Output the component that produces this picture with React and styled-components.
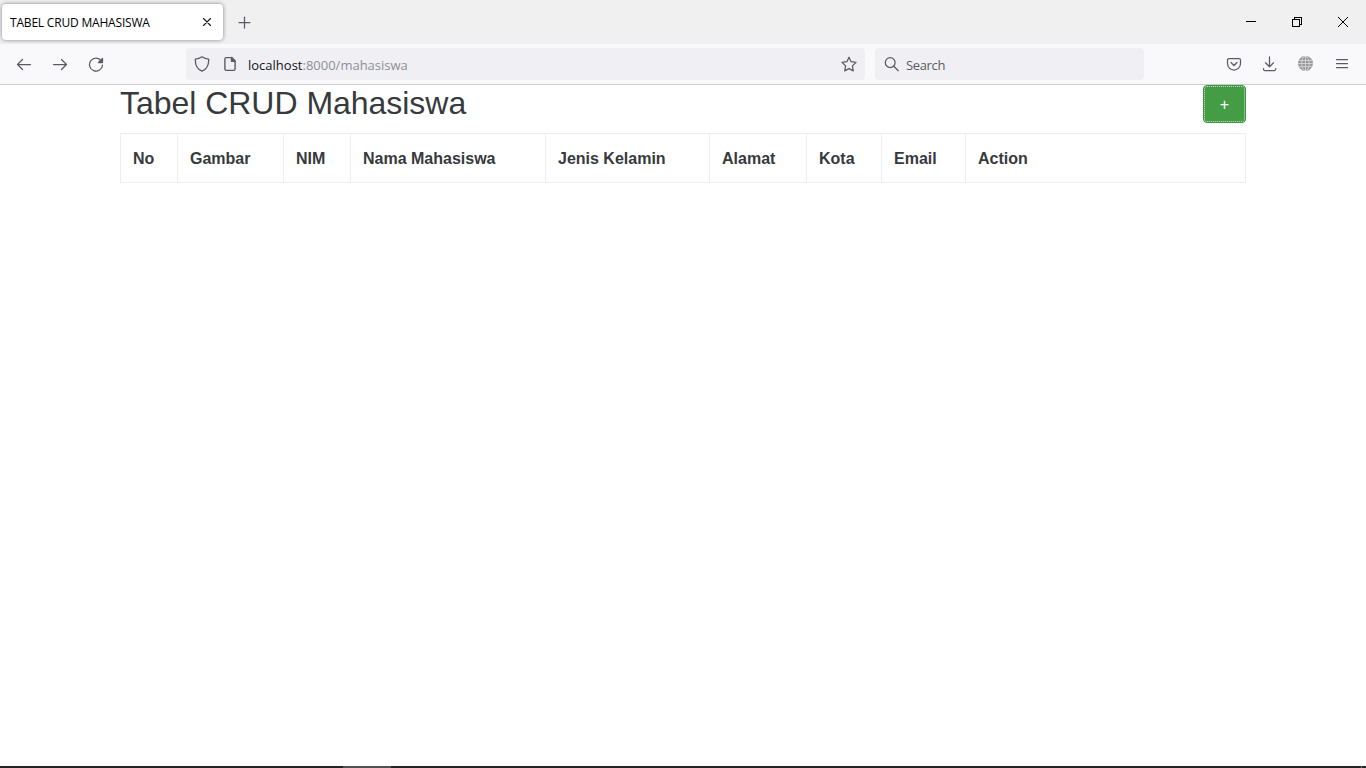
import React from 'react';
import styled, { createGlobalStyle } from 'styled-components';

const GlobalStyle = createGlobalStyle`
  * { box-sizing: border-box; }
  body {
    margin: 0;
    background: #fff;
    overflow: hidden;
    font-family: "Open Sans", "Noto Sans", sans-serif;
  }
`;

const Screen = styled.div`
  display: flex;
  flex-direction: column;
  width: 1366px;
  height: 768px;
`;

const TabStrip = styled.header`
  display: flex;
  align-items: flex-start;
  height: 44px;
  padding: 4px 0 0 2px;
  background: #f0f0f0;
`;

const Tab = styled.div`
  display: flex;
  align-items: center;
  justify-content: space-between;
  width: 221px;
  height: 36px;
  padding: 0 8px;
  border-radius: 4px;
  background: #fff;
  box-shadow: 0 0 4px rgba(0, 0, 0, 0.45);
`;

const TabTitle = styled.span`
  padding-top: 2px;
  font-size: 12px;
  line-height: 16px;
  letter-spacing: -0.19px;
  white-space: nowrap;
  color: #000;
`;

const NewTab = styled.div`
  display: flex;
  margin: 10px 0 0 13px;
`;

const WindowControls = styled.div`
  display: flex;
  margin: -4px 0 0 auto;
`;

const WindowButton = styled.div`
  display: flex;
  align-items: center;
  justify-content: center;
  width: 46px;
  height: 44px;
`;

const Toolbar = styled.nav`
  display: flex;
  align-items: center;
  height: 41px;
  padding: 0 16px;
  border-bottom: 1px solid #cccccf;
  background: #f9f9fb;
`;

const IconGroup = styled.div`
  display: flex;
  gap: 20px;
  margin-left: ${(p) => (p.$end ? 'auto' : '0')};
`;

const Field = styled.div`
  display: flex;
  align-items: center;
  width: ${(p) => p.$width}px;
  height: 32px;
  margin-left: ${(p) => p.$gap}px;
  padding: 0 8px;
  border-radius: 4px;
  background: #f0f0f4;
`;

const FieldText = styled.span`
  flex: 1;
  margin-left: ${(p) => p.$gap}px;
  padding-top: 2px;
  font-size: 13px;
  line-height: 20px;
  letter-spacing: ${(p) => p.$tracking}px;
  white-space: nowrap;
  color: ${(p) => p.$color};
`;

const Host = styled.span`
  color: #15141a;
`;

const PageIcon = styled.span`
  display: flex;
  margin-left: 12px;
`;

const Glyph = styled.svg`
  display: block;
  flex: none;
  fill: none;
  stroke: ${(p) => p.$color || '#5b5b66'};
  stroke-width: ${(p) => p.$weight || 1.25};
  stroke-linecap: round;
  stroke-linejoin: round;
`;

const Page = styled.main`
  flex: 1;
  padding: 0 120px;
  color: #373a3c;
  font-family: "Liberation Sans", Arial, sans-serif;
`;

const Heading = styled.div`
  display: flex;
  justify-content: space-between;
  height: 48px;
`;

const Title = styled.h2`
  margin: 0;
  font-size: 32px;
  font-weight: 400;
  line-height: 37px;
  letter-spacing: -0.03px;
`;

const AddButton = styled.button`
  width: 43px;
  height: 38px;
  padding: 1px 0 0;
  border: 1px solid #419641;
  border-radius: 4px;
  background: #449d44;
  color: #fff;
  outline: 1px dotted #c2dfc2;
  outline-offset: -2px;
  font: 16px/24px "Liberation Sans", Arial, sans-serif;
`;

const Table = styled.table`
  width: 1126px;
  height: 50px;
  table-layout: fixed;
  border-collapse: collapse;
`;

const HeadCell = styled.th`
  width: ${(p) => p.$width}px;
  padding: 2px 12px 0;
  border: 1px solid #eceeef;
  font-size: 16px;
  line-height: 24px;
  text-align: left;
  white-space: nowrap;
`;

const Taskbar = styled.footer`
  display: flex;
  justify-content: space-between;
  height: 2px;
  padding: 0 4px 0 343px;
  background: #242526;
`;

const TaskMark = styled.span`
  width: ${(p) => p.$width}px;
  background: ${(p) => p.$color};
`;

const Icon = ({ size = 16, children, ...rest }) => (
  <Glyph width={size} height={size} viewBox={`0 0 ${size} ${size}`} {...rest}>
    {children}
  </Glyph>
);

const columns = [
  ['No', 57],
  ['Gambar', 106],
  ['NIM', 67],
  ['Nama Mahasiswa', 195],
  ['Jenis Kelamin', 164],
  ['Alamat', 97],
  ['Kota', 75],
  ['Email', 84],
  ['Action', 280],
];

export default function App() {
  return (
    <Screen>
      <GlobalStyle />
      <TabStrip>
        <Tab>
          <TabTitle>TABEL CRUD MAHASISWA</TabTitle>
          <Icon $color="#15141a" $weight={1.1}>
            <path d="M4.5 4.5l7 7M11.5 4.5l-7 7" />
          </Icon>
        </Tab>
        <NewTab>
          <Icon>
            <path d="M8.5 3v11M3 8.5h11" />
          </Icon>
        </NewTab>
        <WindowControls>
          <WindowButton>
            <Icon size={10} $color="#000" $weight={1} shapeRendering="crispEdges">
              <path d="M0 4.5h10" strokeLinecap="butt" />
            </Icon>
          </WindowButton>
          <WindowButton>
            <Icon size={10} $color="#000" $weight={1} shapeRendering="crispEdges">
              <path d="M.5 2.5h7v7h-7zM2.5 2.5v-2h7v7h-2" />
            </Icon>
          </WindowButton>
          <WindowButton>
            <Icon size={10} $color="#000" $weight={1}>
              <path d="M0 0l10 10M10 0L0 10" />
            </Icon>
          </WindowButton>
        </WindowControls>
      </TabStrip>

      <Toolbar>
        <IconGroup>
          <Icon>
            <path d="M14.5 8.5h-13M6.5 3.5l-5 5 5 5" />
          </Icon>
          <Icon>
            <path d="M1.5 8.5h13M9.5 3.5l5 5-5 5" />
          </Icon>
          <Icon>
            <path d="M13.4 5A6.5 6.5 0 1 0 14.5 9" />
            <path d="M14.5 2.5v4h-4z" fill="#5b5b66" />
          </Icon>
        </IconGroup>

        <Field $width={679} $gap={82}>
          <Icon $weight={1.3}>
            <path d="M8 .8c2 1.5 4.2 2.2 6.7 2.3.2 5.3-1.5 9.8-6.7 12.1C2.8 12.900 1.100 8.400 1.300 3.100 3.800 3 6 2.300 8 .8z" />
          </Icon>
          <PageIcon>
            <Icon $weight={1.4}>
              <path d="M9.700 1.600H4.200a1.300 1.300 0 0 0-1.300 1.300v10.200a1.300 1.300 0 0 0 1.300 1.300h7.600a1.300 1.300 0 0 0 1.300-1.300V5z" />
              <path d="M9.500 1.600v3.600h3.600z" fill="#5b5b66" />
            </Icon>
          </PageIcon>
          <FieldText $gap={10} $tracking={0} $color="#8f8f96">
            <Host>localhost</Host>:8000/mahasiswa
          </FieldText>
          <Icon>
            <path d="M8 1.200l2.100 4.500 4.900.7-3.600 3.500.9 5L8 12.600l-4.300 2.300.9-5L1 6.400l4.900-.7z" />
          </Icon>
        </Field>

        <Field $width={269} $gap={10}>
          <Icon size={18}>
            <circle cx="7.2" cy="7.600" r="4.900" />
            <path d="M10.800 11.200l4.500 4.500" />
          </Icon>
          <FieldText $gap={5} $tracking={-0.35} $color="#5b5b66">Search</FieldText>
        </Field>

        <IconGroup $end>
          <Icon>
            <path d="M3 2.500h10A1.500 1.500 0 0 1 14.500 4v3.500a6.500 6.500 0 0 1-13 0V4A1.500 1.500 0 0 1 3 2.500zM5 6.500l3 3 3-3" />
          </Icon>
          <Icon>
            <path d="M7.500 .8v9.700M3.500 6.800l4 4 4-4M1.500 12.500v.8c0 .8.5 1.200 1.200 1.200h9.800c.8 0 1.200-.5 1.200-1.200v-.8" />
          </Icon>
          <Icon $color="#e4e4e6" $weight={0.7}>
            <circle cx="7.500" cy="7.500" r="7.500" fill="#999" stroke="none" />
            <path d="M7.500 0v15M1 4.500h13M0 7.500h15M1 10.700h13" />
            <ellipse cx="7.500" cy="7.500" rx="3.800" ry="7.300" />
          </Icon>
          <Icon>
            <path d="M2.500 3.500h11M2.500 7.500h11M2.500 11.500h11" />
          </Icon>
        </IconGroup>
      </Toolbar>

      <Page>
        <Heading>
          <Title>Tabel CRUD Mahasiswa</Title>
          <AddButton>+</AddButton>
        </Heading>
        <Table>
          <thead>
            <tr>
              {columns.map(([label, width]) => (
                <HeadCell key={label} $width={width}>
                  {label}
                </HeadCell>
              ))}
            </tr>
          </thead>
        </Table>
      </Page>

      <Taskbar>
        <TaskMark $width={48} $color="#525354" />
        <TaskMark $width={1} $color="#77787a" />
      </Taskbar>
    </Screen>
  );
}
